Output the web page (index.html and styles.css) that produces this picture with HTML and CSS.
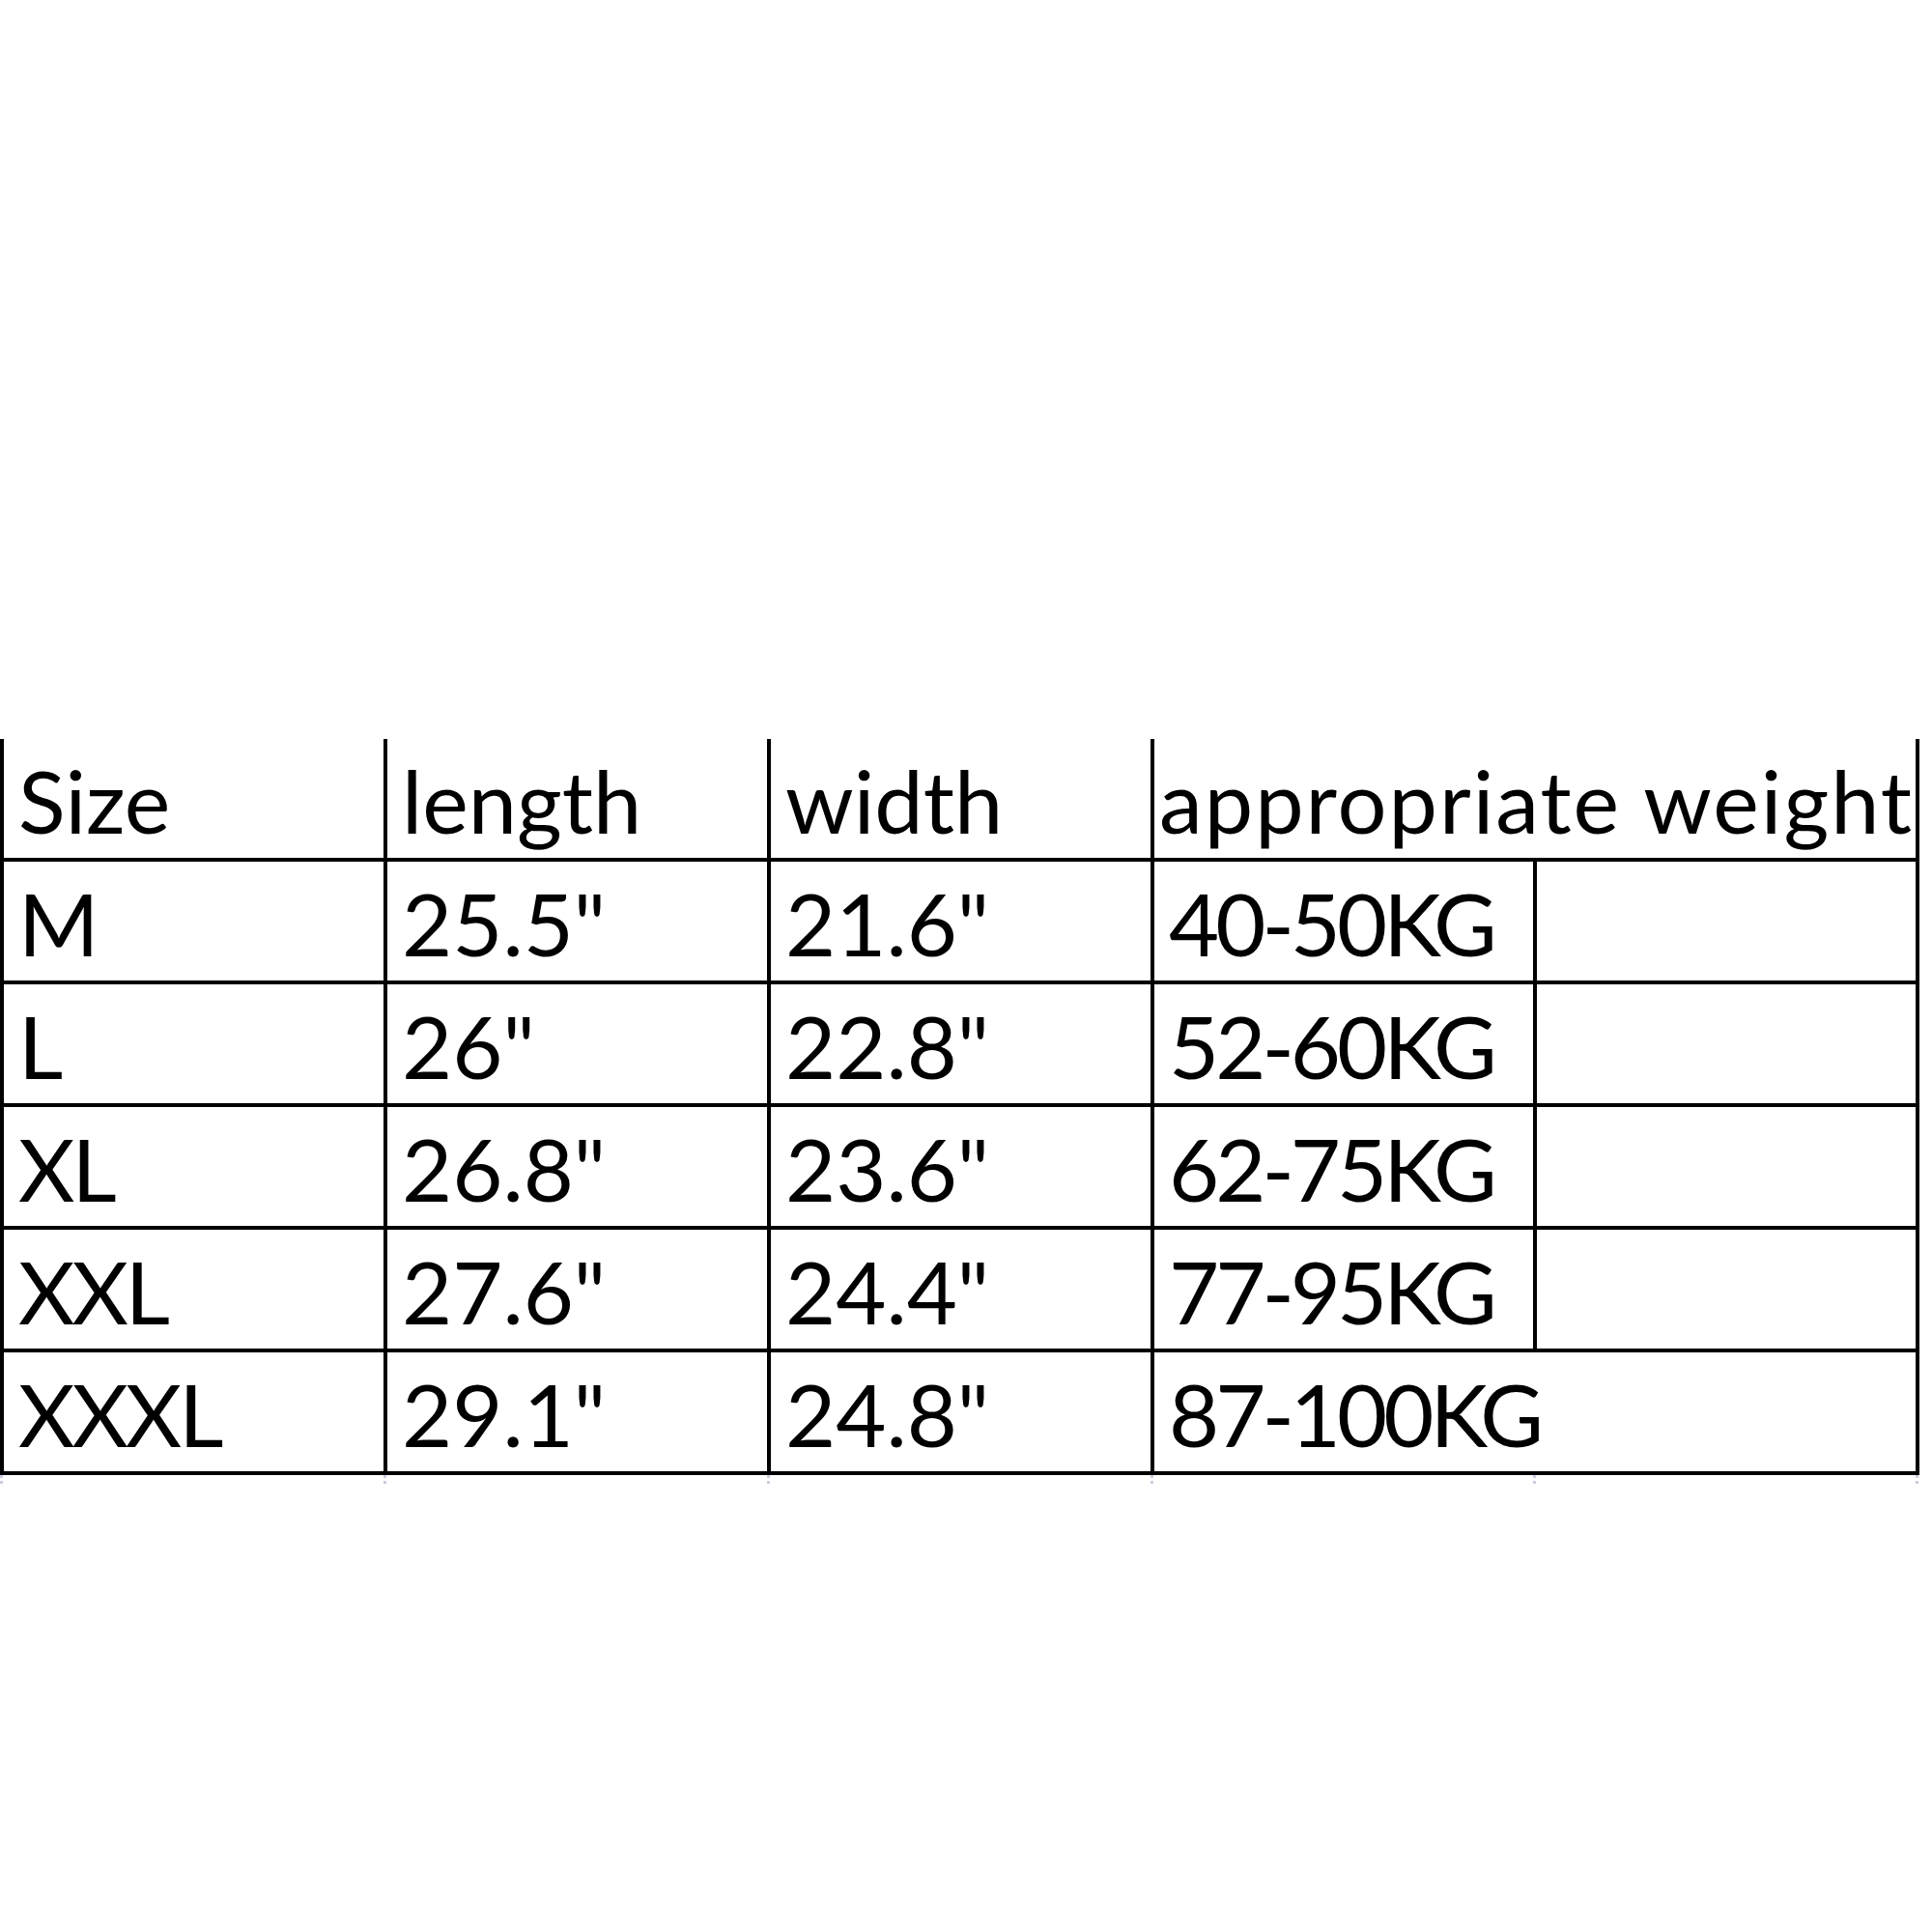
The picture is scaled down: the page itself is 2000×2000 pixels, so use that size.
FILE: index.html
```html
<!DOCTYPE html>
<html>
<head>
<meta charset="utf-8">
<link rel="stylesheet" href="styles.css">
</head>
<body>
<div class="sheet">
  <div class="table">
    <div class="cell">Size</div>
    <div class="cell">length</div>
    <div class="cell">width</div>
    <div class="cell span2 head-weight">appropriate weight</div>

    <div class="cell size">M</div>
    <div class="cell">25.5"</div>
    <div class="cell">21.6"</div>
    <div class="cell kg">40-50KG</div>
    <div class="cell"></div>

    <div class="cell size">L</div>
    <div class="cell">26"</div>
    <div class="cell">22.8"</div>
    <div class="cell kg">52-60KG</div>
    <div class="cell"></div>

    <div class="cell size">XL</div>
    <div class="cell">26.8"</div>
    <div class="cell">23.6"</div>
    <div class="cell kg">62-75KG</div>
    <div class="cell"></div>

    <div class="cell size">XXL</div>
    <div class="cell">27.6"</div>
    <div class="cell">24.4"</div>
    <div class="cell kg">77-95KG</div>
    <div class="cell"></div>

    <div class="cell size">XXXL</div>
    <div class="cell">29.1"</div>
    <div class="cell">24.8"</div>
    <div class="cell span2 kg">87-100KG</div>
  </div>
  <div class="ticks">
    <span class="tick"></span>
    <span class="tick"></span>
    <span class="tick"></span>
    <span class="tick"></span>
    <span class="tick"></span>
    <span class="tick"></span>
  </div>
</div>
</body>
</html>
```

FILE: styles.css
```css
html, body {
  margin: 0;
  padding: 0;
  background: #ffffff;
}

.sheet {
  padding-top: 765px;
  width: 2000px;
}

.table {
  display: grid;
  grid-template-columns: 397px 397px 397px 396px 396px;
  grid-auto-rows: 127px;
  border-left: 4px solid #000;
  width: 1983px;
  font-family: "Lato", "Open Sans", sans-serif;
  font-size: 90px;
  color: #000;
}

.cell {
  box-sizing: border-box;
  border-right: 4px solid #000;
  border-bottom: 4px solid #000;
  display: flex;
  align-items: flex-end;
  padding: 0 0 15px 15px;
  line-height: 1;
  white-space: nowrap;
  overflow: visible;
}

.span2 {
  grid-column: span 2;
}

.head-weight {
  padding-left: 5px;
  letter-spacing: 2px;
}

.size {
  letter-spacing: -3px;
}

.kg {
  letter-spacing: -4px;
}

.ticks {
  display: grid;
  grid-template-columns: 397px 397px 397px 396px 396px 4px;
  height: 14px;
}

.tick {
  display: block;
  width: 3px;
  height: 12px;
  background: repeating-linear-gradient(to bottom, #c9cede 0 3px, transparent 3px 6px);
}
```
